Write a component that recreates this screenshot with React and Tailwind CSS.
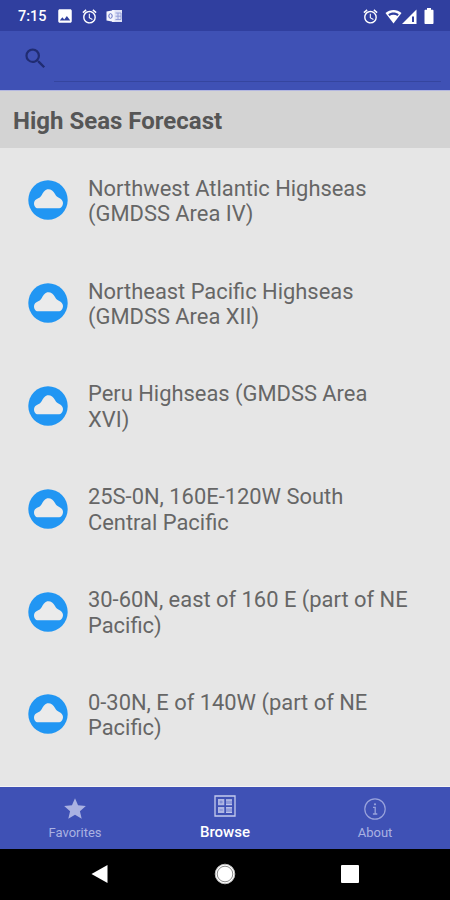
import { MdAlarm, MdImage, MdSearch, MdStar } from "react-icons/md";

const forecasts = [
    "Northwest Atlantic Highseas (GMDSS Area IV)",
    "Northeast Pacific Highseas (GMDSS Area XII)",
    "Peru Highseas (GMDSS Area XVI)",
    "25S-0N, 160E-120W South Central Pacific",
    "30-60N, east of 160 E (part of NE Pacific)",
    "0-30N, E of 140W (part of NE Pacific)",
];

const OutlookIcon = () => (
    <svg width="17" height="14" viewBox="0 0 17 14" fill="none">
        <path d="M6 1h10v12H6z" fill="#dfe2f6" />
        <path d="M0.5 2.5l8-1.5v12l-8-1.500z" fill="#f4f5fd" />
        <ellipse cx="4.500" cy="7" rx="1.700" ry="2.300" stroke="#6370c4" />
        <path
            d="M9.500 4h5.500v6.500H9.500M9.500 7.200h5.500M12 4v6.500"
            stroke="#8d97d6"
            strokeWidth="0.9"
        />
    </svg>
);

const WifiIcon = () => (
    <svg width="17" height="15" viewBox="0 0 17 15">
        <path d="M0.500 4C5 0 12 0 16.500 4L8.500 14.500z" fill="#fff" />
        <path d="M3.200 5.200c3.200-2.300 7.400-2.300 10.600 0l-1.300 1.700c-2.400-1.500-5.600-1.500-8 0z" fill="#303f9f" />
    </svg>
);

const SignalIcon = () => (
    <svg width="15" height="15" viewBox="0 0 15 15">
        <path d="M0 15L14.500 0.500V15z" fill="#fff" />
        <path d="M10 7.500h2v5.500h-2z" fill="#303f9f" />
    </svg>
);

const BatteryIcon = () => (
    <svg width="10" height="16" viewBox="0 0 10 16" fill="#fff">
        <path d="M3 0h4v1.700h1.500c.700 0 1 .400 1 1V15c0 .600-.400 1-1 1h-7c-.600 0-1-.400-1-1V2.700c0-.600.300-1 1-1H3z" />
    </svg>
);

const CloudBadge = () => (
    <svg width="40" height="40" viewBox="0 0 40 40" className="shrink-0">
        <circle cx="20" cy="20" r="19.700" fill="#2196f3" />
        <path
            d="M10 28.300C7.500 28.300 6 26 6 23.200c0-2.300 1.600-4 4.200-5 1.700-.7 2.600-1.600 3.600-3.200C15.500 11.800 17.300 9.300 20.300 9.300c2.900 0 5 1.700 6.700 4.700.9 1.700 2 2.800 3.800 3.700 2.600 1.300 4.200 2.900 4.200 5.300 0 2.900-1.900 5.300-4.500 5.300z"
            fill="#ebebeb"
        />
    </svg>
);

const BrowseIcon = () => (
    <svg width="22" height="22" viewBox="0 0 22 22" fill="none" stroke="#c5cbed">
        <path d="M1 1h20v20H1z" strokeWidth="1.300" />
        <path d="M4 4h6.300v6.300H4zM4 12h6.300v6H4z" fill="#aeb6e3" stroke="none" />
        <path d="M12 4.200h6v6h-6zM12 12h6v6h-6z" fill="#8f9ad9" stroke="none" />
        <path d="M12 5h6M12 9.600h6M12 12.800h6M12 17.400h6" strokeWidth="1" />
        <path d="M5.500 7h3.300M7 5.500v3M5.500 15h3.300" stroke="#7783cf" />
    </svg>
);

const AboutIcon = () => (
    <svg width="22" height="22" viewBox="0 0 22 22" fill="none" stroke="#99a3dc">
        <circle cx="11" cy="11" r="10.200" strokeWidth="1.200" />
        <path d="M9 9.300h2.200v6.500M8.900 16h4.400" strokeWidth="1.300" />
        <circle cx="11" cy="6.300" r="1.100" fill="#99a3dc" stroke="none" />
    </svg>
);

const StatusBar = () => (
    <div className="flex h-[31px] shrink-0 items-center bg-[#303f9f] pt-px pr-4 pl-[18px] text-white">
        <span className="w-[38px] pt-px text-[14.500px] font-medium">7:15</span>
        <MdImage className="text-[18px]" />
        <MdAlarm className="ml-[7px] text-[17px]" />
        <div className="ml-[8px]">
            <OutlookIcon />
        </div>
        <MdAlarm className="ml-auto text-[17px]" />
        <div className="ml-[6px] flex items-center">
            <WifiIcon />
            <SignalIcon />
            <div className="ml-[7px]">
                <BatteryIcon />
            </div>
        </div>
    </div>
);

const SearchBar = () => (
    <div className="flex h-[59px] shrink-0 bg-[#3f51b5] pt-[13px] pr-[9px] pl-[22px]">
        <MdSearch className="mt-px shrink-0 text-[27px] text-[#202c72]" />
        <div className="ml-[5px] h-[38px] grow border-b border-[#35459f]" />
    </div>
);

const TabBar = () => (
    <div className="grid h-[62px] shrink-0 grid-cols-3 bg-[#3f51b5] text-[13px] leading-[16px] text-[#aab2e2]">
        <div className="flex flex-col items-center pt-[9px]">
            <MdStar className="text-[26px]" />
            <span className="mt-[3px]">Favorites</span>
        </div>
        <div className="flex flex-col items-center pt-[8px] text-[15px] font-medium text-white">
            <BrowseIcon />
            <span className="mt-[7px]">Browse</span>
        </div>
        <div className="flex flex-col items-center pt-[11px]">
            <AboutIcon />
            <span className="mt-[5px]">About</span>
        </div>
    </div>
);

const NavBar = () => (
    <div className="flex h-[51px] shrink-0 items-center bg-black pb-[2px] pl-[91px]">
        <svg width="17" height="20" viewBox="0 0 17 20">
            <path d="M0.500 10L16.500 1v18z" fill="#fff" />
        </svg>
        <svg width="22" height="22" viewBox="0 0 22 22" className="ml-[106px]">
            <circle cx="11" cy="11" r="9.800" fill="#fff" stroke="#bdbdbd" />
            <circle cx="11" cy="11" r="7.800" fill="none" stroke="#8c8c8c" />
        </svg>
        <div className="ml-[105px] size-[18px] rounded-[1px] bg-white" />
    </div>
);

const App = () => {
    return (
        <div className="flex h-[900px] w-[450px] flex-col overflow-hidden bg-[#e6e6e6] font-['Roboto',sans-serif]">
            <StatusBar />
            <SearchBar />
            <h1 className="flex h-[58px] shrink-0 items-center border-t border-[#b3b7e0] bg-[#d3d3d3] pt-[2px] pl-[13px] text-[24px] font-bold text-[#565656]">
                High Seas Forecast
            </h1>
            <ul className="flex h-[639px] shrink-0 flex-col border-b border-[#f3f3f3] pt-px">
                {forecasts.map((name) => (
                    <li
                        key={name}
                        className="flex h-[102.800px] shrink-0 items-center gap-5 pr-[40px] pl-[28px]"
                    >
                        <CloudBadge />
                        <span className="pt-[2px] text-[21.900px] leading-[25.500px] text-[#666]">
                            {name}
                        </span>
                    </li>
                ))}
            </ul>
            <TabBar />
            <NavBar />
        </div>
    );
};

export default App;
